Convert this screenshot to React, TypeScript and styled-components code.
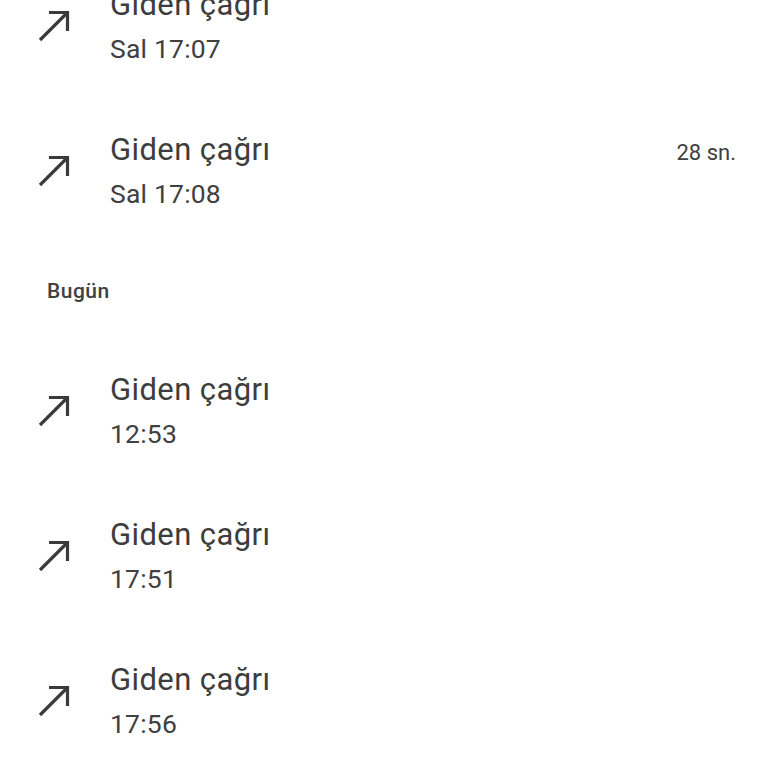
import React from "react";
import styled, { createGlobalStyle } from "styled-components";

const Global = createGlobalStyle`
  html, body {
    margin: 0;
    padding: 0;
    background: #ffffff;
    font-family: Roboto, "Noto Sans", "Liberation Sans", sans-serif;
  }
  #root {
    width: 768px;
    height: 768px;
    overflow: hidden;
  }
`;

const List = styled.div`
  display: flex;
  flex-direction: column;
  margin-top: -47px;
`;

const Row = styled.div`
  height: 145px;
  display: grid;
  grid-template-columns: 110px 1fr auto;
  align-items: center;
  padding-right: 32px;
  box-sizing: border-box;
`;

const IconCell = styled.div`
  display: flex;
  align-items: center;
  padding-left: 38px;
`;

const TextBlock = styled.div`
  display: flex;
  flex-direction: column;
  gap: 6px;
  padding-top: 2px;
`;

const Title = styled.div`
  font-size: 31px;
  line-height: 38px;
  color: #3d3d3d;
  letter-spacing: 0.4px;
`;

const Sub = styled.div`
  font-size: 26.5px;
  line-height: 38px;
  color: #404040;
  letter-spacing: 0.2px;
`;

const Trailing = styled.div`
  align-self: center;
  font-size: 22px;
  color: #404040;
  margin-top: -36px;
`;

const Header = styled.div`
  height: 95px;
  display: flex;
  align-items: center;
  padding-left: 47px;
  box-sizing: border-box;
  font-size: 21px;
  font-weight: 500;
  letter-spacing: 0.5px;
  color: #404040;
`;

const Arrow = () => (
  <svg width="33" height="33" viewBox="0 0 33 33" fill="none">
    <path d="M2 31 L30 3" stroke="#3a3a3a" strokeWidth="3.2" />
    <path d="M11 3.5 H29.5 V22" stroke="#3a3a3a" strokeWidth="3.2" />
  </svg>
);

type Call = { time: string; duration?: string };

const CallRow = ({ time, duration }: Call) => (
  <Row>
    <IconCell>
      <Arrow />
    </IconCell>
    <TextBlock>
      <Title>Giden çağrı</Title>
      <Sub>{time}</Sub>
    </TextBlock>
    {duration ? <Trailing>{duration}</Trailing> : <span />}
  </Row>
);

export default function App() {
  return (
    <>
      <Global />
      <List>
        <CallRow time="Sal 17:07" />
        <CallRow time="Sal 17:08" duration="28 sn." />
        <Header>Bugün</Header>
        <CallRow time="12:53" />
        <CallRow time="17:51" />
        <CallRow time="17:56" />
      </List>
    </>
  );
}
